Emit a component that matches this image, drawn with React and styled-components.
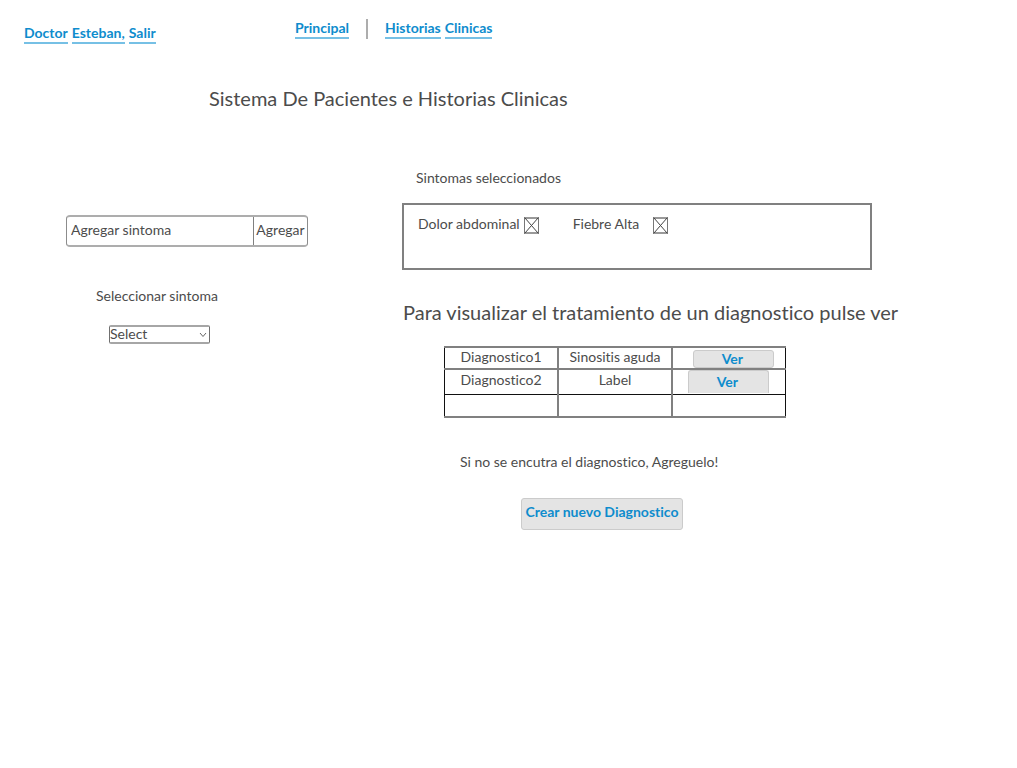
import React from "react";
import styled, { createGlobalStyle } from "styled-components";

const GlobalStyle = createGlobalStyle`
  *, *::before, *::after { box-sizing: border-box; }
  body {
    margin: 0;
    background: #fff;
    color: #4c4c4c;
    font-family: Lato, "Liberation Sans", sans-serif;
    font-size: 14px;
    line-height: 20px;
    font-variant-ligatures: none;
  }
  button, input, select { font: inherit; font-variant-ligatures: none; color: inherit; margin: 0; }
`;

const Header = styled.header`
  display: grid;
  grid-template-columns: 271px 1fr;
  padding: 18px 24px 0;
`;

const UserArea = styled.div`
  padding-top: 5px;
`;

const Nav = styled.nav`
  display: flex;
  align-items: flex-start;
  gap: 17px;
`;

const TextLink = styled.a`
  display: inline-flex;
  gap: 4px;
  color: #0e8ccd;
  font-weight: 700;
  text-decoration: none;
`;

const Word = styled.span`
  border-bottom: 2px solid #76c0e5;
  line-height: 19px;
`;

const Separator = styled.span`
  width: 2px;
  height: 20px;
  margin-top: 1px;
  background: #adadad;
`;

const Title = styled.h1`
  margin: 39px 0 0 209px;
  font-size: 20px;
  line-height: 30px;
  font-weight: 400;
`;

const Main = styled.main`
  display: grid;
  grid-template-columns: 402px minmax(0, 1fr);
  padding-top: 55px;
`;

const Picker = styled.section`
  padding: 47px 0 0 66px;
`;

const AddForm = styled.form`
  display: flex;
  width: 242px;
  height: 32px;
  border: solid #8c8c8c;
  border-width: 2px 1px;
  border-top-color: #adadad;
  border-bottom-color: #adadad;
  border-radius: 4px;
`;

const AddInput = styled.input`
  flex: 1;
  min-width: 0;
  padding: 0 4px 2px;
  border: 0;
  background: transparent;
  &::placeholder { color: #4c4c4c; opacity: 1; }
`;

const AddButton = styled.button`
  width: 54px;
  padding: 0 0 2px;
  border: 0;
  border-left: 1px solid #808080;
  background: transparent;
`;

const SelectLabel = styled.label`
  display: block;
  margin: 39px 0 19px 30px;
`;

const SelectWrap = styled.div`
  display: grid;
  align-items: center;
  width: 101px;
  margin-left: 43px;
  > * { grid-area: 1 / 1; }
  svg { justify-self: end; margin-right: 3px; pointer-events: none; }
`;

const Select = styled.select`
  appearance: none;
  width: 100%;
  height: 19px;
  padding: 0 0 1px;
  border: solid #707070;
  border-width: 2px 1px;
  border-top-color: #a6a6a6;
  border-bottom-color: #a6a6a6;
  border-radius: 2px;
  background: #fff;
  line-height: 14px;
`;

const Results = styled.section`
  padding-right: 128px;
`;

const Subtitle = styled.h2`
  margin: 0 0 15px 14px;
  font-size: 14px;
  line-height: 20px;
  font-weight: 400;
`;

const SymptomBox = styled.div`
  display: flex;
  align-items: flex-start;
  gap: 34px;
  min-height: 67px;
  max-width: 470px;
  padding: 9px 14px;
  border: 2px solid #808080;
`;

const Symptom = styled.div`
  display: flex;
  align-items: center;
  gap: ${(p) => p.$gap};
`;

const RemoveButton = styled.button`
  display: flex;
  padding: 2px 0 0;
  border: 0;
  background: none;
`;

const Instruction = styled.h2`
  margin: 27px 0 19px 1px;
  font-size: 20px;
  line-height: 30px;
  font-weight: 400;
  white-space: nowrap;
`;

const Table = styled.table`
  width: 342px;
  margin-left: 42px;
  border-collapse: collapse;
  table-layout: fixed;
`;

const Row = styled.tr`
  height: ${(p) => p.$height};
`;

const Cell = styled.td`
  padding: 0;
  border: solid #808080;
  border-width: 2px;
  text-align: center;
  vertical-align: top;
  line-height: 18px;
  &:first-child { border-left: 1px solid #111; }
  &:last-child { border-right: 1px solid #111; }
  tr:nth-child(2) > & { border-bottom: 1px solid #111; line-height: 20px; }
  tr:last-child > & { border-top: 1px solid #111; }
`;

const GreyButton = styled.button`
  border: 1px solid #cbcbcb;
  border-radius: 3px;
  background: #e4e4e4;
  color: #0e8ccd;
  font-weight: 700;
  padding: 0;
`;

const ViewButton = styled(GreyButton)`
  display: block;
  width: 81px;
  height: ${(p) => (p.$tall ? "23px" : "18px")};
  margin: ${(p) => (p.$tall ? "0 0 0 15px" : "2px 0 0 20px")};
  line-height: 16px;
  padding-right: 2px;
  ${(p) => p.$tall && "border-radius: 3px 3px 0 0; border-bottom: 0;"}
`;

const Note = styled.p`
  margin: 34px 0 26px 58px;
`;

const CreateButton = styled(GreyButton)`
  display: block;
  width: 162px;
  height: 32px;
  margin-left: 119px;
  padding-bottom: 4px;
  white-space: nowrap;
`;

const symptoms = [
  { name: "Dolor abdominal", gap: "4px" },
  { name: "Fiebre Alta", gap: "14px" },
];

const words = (text) => text.split(" ").map((word) => <Word key={word}>{word}</Word>);

export default function App() {
  return (
    <>
      <GlobalStyle />
      <Header>
        <UserArea>
          <TextLink href="#salir">{words("Doctor Esteban, Salir")}</TextLink>
        </UserArea>
        <Nav>
          <TextLink href="#principal">{words("Principal")}</TextLink>
          <Separator />
          <TextLink href="#historias">{words("Historias Clinicas")}</TextLink>
        </Nav>
      </Header>
      <Title>Sistema De Pacientes e Historias Clinicas</Title>
      <Main>
        <Picker>
          <AddForm onSubmit={(e) => e.preventDefault()}>
            <AddInput aria-label="Agregar sintoma" placeholder="Agregar sintoma" />
            <AddButton type="submit">Agregar</AddButton>
          </AddForm>
          <SelectLabel htmlFor="sintoma">Seleccionar sintoma</SelectLabel>
          <SelectWrap>
            <Select id="sintoma">
              <option>Select</option>
            </Select>
            <svg width="8" height="6" viewBox="0 0 8 6" fill="none" stroke="#666">
              <path d="M1 1 L4 4.500 L7 1" />
            </svg>
          </SelectWrap>
        </Picker>
        <Results>
          <Subtitle>Sintomas seleccionados</Subtitle>
          <SymptomBox>
            {symptoms.map((s) => (
              <Symptom key={s.name} $gap={s.gap}>
                {s.name}
                <RemoveButton type="button" aria-label={`Quitar ${s.name}`}>
                  <svg width="15" height="17" viewBox="0 0 15 17" fill="none">
                    <path stroke="#999" strokeWidth="2" d="M0 1h15M0 16h15" />
                    <path stroke="#777" d="M.5 0v17M14.500 0v17" />
                    <path stroke="#444" d="M1 1l13 15M14 1L1 16" />
                  </svg>
                </RemoveButton>
              </Symptom>
            ))}
          </SymptomBox>
          <Instruction>Para visualizar el tratamiento de un diagnostico pulse ver</Instruction>
          <Table>
            <tbody>
              <Row $height="22px">
                <Cell>Diagnostico1</Cell>
                <Cell>Sinositis aguda</Cell>
                <Cell><ViewButton type="button">Ver</ViewButton></Cell>
              </Row>
              <Row $height="25px">
                <Cell>Diagnostico2</Cell>
                <Cell>Label</Cell>
                <Cell><ViewButton type="button" $tall>Ver</ViewButton></Cell>
              </Row>
              <Row $height="23px">
                <Cell />
                <Cell />
                <Cell />
              </Row>
            </tbody>
          </Table>
          <Note>Si no se encutra el diagnostico, Agreguelo!</Note>
          <CreateButton type="button">Crear nuevo Diagnostico</CreateButton>
        </Results>
      </Main>
    </>
  );
}
